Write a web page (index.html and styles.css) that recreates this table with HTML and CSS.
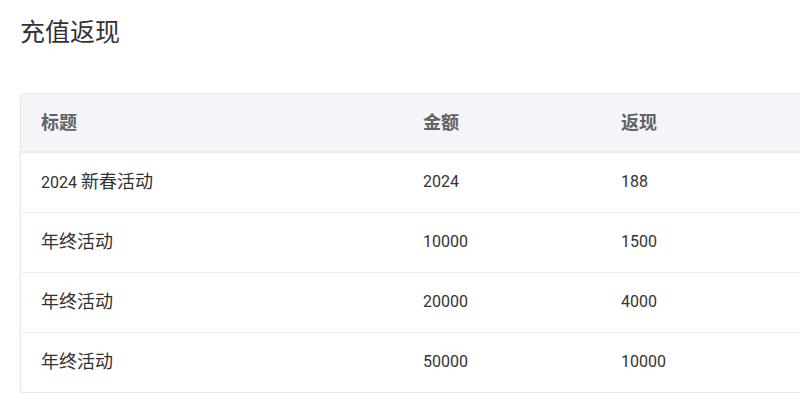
FILE: index.html
```html
<!DOCTYPE html>
<html lang="zh-CN">
<head>
<meta charset="utf-8">
<title>充值返现</title>
<link rel="stylesheet" href="styles.css">
</head>
<body>
<div class="page">
  <h1 class="title">充值返现</h1>
  <div class="card">
    <table class="table">
      <colgroup>
        <col class="c1"><col class="c2"><col class="c3">
      </colgroup>
      <thead>
        <tr><th><span class="cjk">标题</span></th><th><span class="cjk">金额</span></th><th><span class="cjk">返现</span></th></tr>
      </thead>
      <tbody>
        <tr><td>2024 <span class="cjk">新春活动</span></td><td>2024</td><td>188</td></tr>
        <tr><td><span class="cjk">年终活动</span></td><td>10000</td><td>1500</td></tr>
        <tr><td><span class="cjk">年终活动</span></td><td>20000</td><td>4000</td></tr>
        <tr><td><span class="cjk">年终活动</span></td><td>50000</td><td>10000</td></tr>
      </tbody>
    </table>
  </div>
</div>
</body>
</html>
```
FILE: styles.css
```css
html, body {
  margin: 0;
  padding: 0;
  background: #fff;
  overflow: hidden;
}
body {
  font-family: Roboto, "Noto Sans CJK SC", sans-serif;
  color: #333;
}
.page {
  padding: 12px 20px 0 20px;
  width: 1100px;
}
.title {
  margin: 0;
  font-family: "Noto Sans CJK SC", sans-serif;
  font-size: 25px;
  line-height: 36px;
  font-weight: 400;
  color: #333;
}
.card {
  margin-top: 45px;
  border: 1px solid #e6e8ec;
  border-radius: 4px;
  box-shadow: 0 2px 3px rgba(0, 0, 0, 0.08);
  overflow: hidden;
  background: #fff;
}
.table {
  width: 100%;
  border-collapse: collapse;
  table-layout: fixed;
}
.c1 { width: 382px; }
.c2 { width: 198px; }
.table th {
  background: #f4f5f9;
  height: 57px;
  padding: 0 20px;
  text-align: left;
  font-size: 16px;
  line-height: 20px;
  font-weight: 600;
  color: #606266;
  border-bottom: 2px solid #e8eaee;
}
.table td {
  height: 57px;
  padding: 0 20px 2px 20px;
  font-size: 16px;
  line-height: 20px;
  color: #333;
  border-bottom: 1px solid #eeeff2;
}
.table tbody tr:last-child td {
  border-bottom: none;
}
.cjk {
  font-family: "Noto Sans CJK SC", sans-serif;
  font-size: 18px;
  line-height: 20px;
}
```
